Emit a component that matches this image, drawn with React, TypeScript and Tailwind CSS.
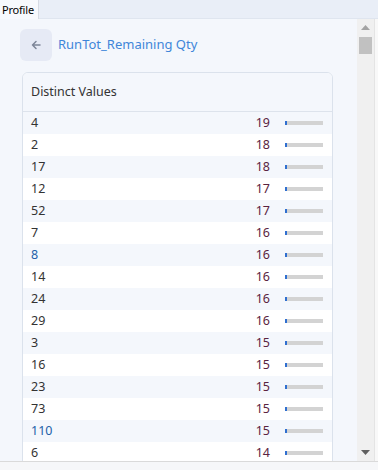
import React from "react";

const rows: { v: string; c: number; blue?: boolean }[] = [
  { v: "4", c: 19 },
  { v: "2", c: 18 },
  { v: "17", c: 18 },
  { v: "12", c: 17 },
  { v: "52", c: 17 },
  { v: "7", c: 16 },
  { v: "8", c: 16, blue: true },
  { v: "14", c: 16 },
  { v: "24", c: 16 },
  { v: "29", c: 16 },
  { v: "3", c: 15 },
  { v: "16", c: 15 },
  { v: "23", c: 15 },
  { v: "73", c: 15 },
  { v: "110", c: 15, blue: true },
  { v: "6", c: 14 },
];

export default function App() {
  return (
    <div
      className="w-[378px] h-[470px] overflow-hidden bg-[#f4f7fc] flex flex-col text-[#333]"
      style={{ fontFamily: '"Noto Sans", "Open Sans", sans-serif' }}
    >
      {/* tab strip */}
      <div className="h-[19px] flex shrink-0 bg-[#e9eef7]">
        <div className="w-[39px] bg-[#f7f9fd] border-r border-[#d6dbe4] text-[11px] leading-[19px] pl-[2px] text-black tracking-[-0.2px]">
          Profile
        </div>
        <div className="flex-1 border-b border-[#dfe5ef]" />
      </div>

      {/* main */}
      <div className="h-[442px] flex shrink-0">
        <div className="flex-1 overflow-hidden pt-[10px] pl-[20px] pr-[24px]">
          <div className="flex items-center h-[32px]">
            <div className="w-[32px] h-[32px] rounded-[6px] bg-[#e6eaf5] flex items-center justify-center">
              <svg width="12" height="12" viewBox="0 0 12 12" fill="none">
                <path d="M10 6H2.5M6 2.5L2.5 6L6 9.5" stroke="#7d8698" strokeWidth="1.5" strokeLinecap="round" strokeLinejoin="round" />
              </svg>
            </div>
            <div className="ml-[6px] text-[13px] text-[#3f86d9]">RunTot_Remaining Qty</div>
          </div>

          <div className="mt-[11px] ml-[2px] w-[311px] border border-[#dbe2ec] rounded-t-[6px] bg-white overflow-hidden">
            <div className="h-[39px] bg-[#f4f7fc] border-b border-[#dde3ec] flex items-center pl-[8px] text-[12.5px] text-[#333]">
              Distinct Values
            </div>
            {rows.map((r, i) => (
              <div
                key={i}
                className={`h-[22px] flex items-center text-[12.5px] ${i % 2 === 0 ? "bg-[#f4f7fc]" : "bg-white"}`}
              >
                <div className={`flex-1 pl-[8px] ${r.blue ? "text-[#2361a8]" : "text-[#333]"}`}>{r.v}</div>
                <div className="w-[40px] text-right text-[#5a2340]">{r.c}</div>
                <div className="ml-[15px] mr-[9px] w-[38px] h-[4px] bg-[#d3d3d3] flex">
                  <div className="w-[2px] h-[4px] bg-[#2f6fd0]" />
                </div>
              </div>
            ))}
          </div>
        </div>

        {/* scrollbar */}
        <div className="w-[17px] bg-[#f0f0f0] flex flex-col items-center">
          <div className="h-[17px] w-full flex items-center justify-center">
            <svg width="9" height="5" viewBox="0 0 9 5">
              <path d="M0 5L4.5 0L9 5Z" fill="#a3a3a3" />
            </svg>
          </div>
          <div className="w-[13px] h-[17px] bg-[#c1c1c1] mt-[1px]" />
          <div className="flex-1" />
          <div className="h-[17px] w-full flex items-center justify-center">
            <svg width="9" height="5" viewBox="0 0 9 5">
              <path d="M0 0L4.5 5L9 0Z" fill="#606060" />
            </svg>
          </div>
        </div>
        <div className="w-[4px] bg-[#f8f8f8] border-l border-[#e4e4e4]" />
      </div>

      {/* bottom strip */}
      <div className="flex-1 border-t border-[#dadada] bg-[#f6f7f9]" />
    </div>
  );
}
